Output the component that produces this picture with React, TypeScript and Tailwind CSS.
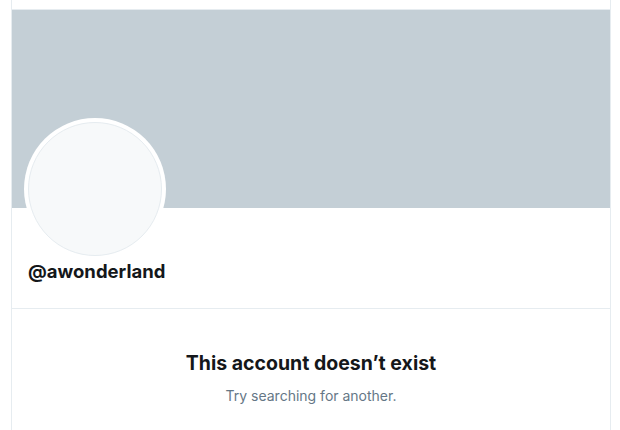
export default function App() {
  return (
    <div
      className="w-[620px] h-[430px] bg-white overflow-hidden"
      style={{ fontFamily: "Inter, 'Liberation Sans', sans-serif" }}
    >
      <div className="ml-[11px] w-[600px] h-full border-x border-[#e6ecf0]">
        <div className="h-[10px] border-b border-[#e6ecf0]" />
        <div className="h-[198px] bg-[#c4cfd6]" />
        <div className="flex flex-col px-3 h-[101px] border-b border-[#e6ecf0]">
          <div className="-mt-[90px] w-[142px] h-[142px] rounded-full bg-white p-[4px]">
            <div className="w-full h-full rounded-full bg-[#f7f9fa] border border-[#e6ecf0]" />
          </div>
          <div className="-mt-[1px] pl-[4px] text-[18.5px] leading-[24px] font-bold text-[#14171a]">
            @awonderland
          </div>
        </div>
        <div className="flex flex-col items-center pt-[42px]">
          <h2 className="text-[19.5px] leading-[25px] font-bold text-[#14171a]">
            This account doesn’t exist
          </h2>
          <p className="mt-[10px] text-[14px] leading-[20px] text-[#657786]">
            Try searching for another.
          </p>
        </div>
      </div>
    </div>
  );
}
